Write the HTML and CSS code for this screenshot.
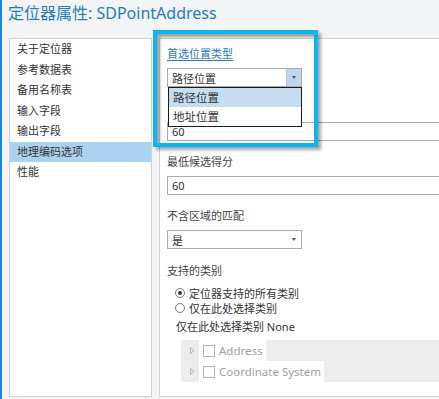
FILE: index.html
```html
<!DOCTYPE html>
<html lang="zh-Hans">
<head>
    <meta charset="UTF-8">
    <meta name="viewport" content="width=device-width, initial-scale=1.0">
    <title>定位器属性: SDPointAddress</title>
    <link rel="stylesheet" href="styles.css">
</head>
<body>

    <div class="dialog">
        <h1 class="dialog-title">定位器属性: SDPointAddress</h1>

        <div class="dialog-body">
            <ul class="nav-list">
                <li class="nav-item">关于定位器</li>
                <li class="nav-item">参考数据表</li>
                <li class="nav-item">备用名称表</li>
                <li class="nav-item">输入字段</li>
                <li class="nav-item">输出字段</li>
                <li class="nav-item active">地理编码选项</li>
                <li class="nav-item">性能</li>
            </ul>

            <div class="panel">
                <div class="field">
                    <div class="field-label focused">首选位置类型</div>
                    <div class="combo">
                        <span class="combo-value">路径位置</span>
                        <span class="combo-btn open"><span class="arrow"></span></span>
                        <ul class="combo-list">
                            <li class="combo-option selected">路径位置</li>
                            <li class="combo-option">地址位置</li>
                        </ul>
                    </div>
                </div>

                <!-- its label sits under the open list -->
                <div class="field">
                    <div class="field-label covered"></div>
                    <div class="text-input">60</div>
                </div>

                <div class="field">
                    <div class="field-label">最低候选得分</div>
                    <div class="text-input">60</div>
                </div>

                <div class="field">
                    <div class="field-label">不含区域的匹配</div>
                    <div class="combo">
                        <span class="combo-value">是</span>
                        <span class="combo-btn"><span class="arrow"></span></span>
                    </div>
                </div>

                <div class="field field-categories">
                    <div class="field-label">支持的类别</div>
                    <div class="radio-row"><span class="radio checked"></span>定位器支持的所有类别</div>
                    <div class="radio-row"><span class="radio"></span>仅在此处选择类别</div>
                    <div class="selected-note">仅在此处选择类别 None</div>

                    <div class="tree">
                        <div class="tree-row">
                            <svg class="expander" width="18" height="21" viewBox="0 0 18 21"><path d="M9.5 7.5 L13 10.5 L9.5 13.5 Z" fill="none" stroke="#b4b4b4" stroke-width="1"/></svg>
                            <span class="tree-item"><span class="checkbox"></span>Address</span>
                        </div>
                        <div class="tree-row">
                            <svg class="expander" width="18" height="21" viewBox="0 0 18 21"><path d="M9.5 7.5 L13 10.5 L9.5 13.5 Z" fill="none" stroke="#b4b4b4" stroke-width="1"/></svg>
                            <span class="tree-item"><span class="checkbox"></span>Coordinate System</span>
                        </div>
                    </div>
                </div>
            </div>
        </div>

        <!-- callout frame drawn over the first option -->
        <div class="callout"></div>
    </div>

</body>
</html>
```

FILE: styles.css
```css
:root {
    --dialog-bg: #f3f4f5;
    --panel-bg: #ffffff;
    --text-dark: #333333;
    --title-blue: #1f7cc2;
    --edge-blue: #1b87d6;
    --callout: #0db5ee;
    --border: #cfd1d3;
    --input-border: #ababab;
    --select-bg: #a9d3f1;
    --option-bg: #c6ddf1;
}

body {
    margin: 0;
    overflow: hidden;
    background-color: var(--dialog-bg);
    font-family: "Noto Sans", "Noto Sans CJK SC", sans-serif;
    color: var(--text-dark);
}

.dialog {
    position: relative;
    height: 399px;
    border-left: 2px solid var(--edge-blue);
}

.dialog-title {
    margin: 0;
    height: 38px; box-sizing: border-box;
    padding: 2px 0 0 6px;
    font-size: 16px; font-weight: 400; line-height: 22px;
    color: var(--title-blue);
}

.dialog-body {
    display: flex;
    gap: 7px;
    padding-left: 7px;
}

/* ---- left navigation ---- */
.nav-list {
    list-style: none; margin: 0; padding: 0;
    width: 143px; height: 359px; box-sizing: border-box;
    flex: none;
    background-color: var(--panel-bg);
    border: 1px solid var(--border);
}
.nav-item {
    height: 20.5px; line-height: 20.5px;
    padding-left: 7px;
    font-size: 11px;
}
.nav-item.active { background-color: var(--select-bg); }

/* ---- right panel ---- */
.panel {
    flex: none;
    width: 420px; height: 359px; box-sizing: border-box;
    padding: 7px 0 0 7px;
    background-color: var(--panel-bg);
    border: 1px solid var(--border);
}

.field { margin-bottom: 13px; }
.field-label { font-size: 11px; line-height: 16px; margin-bottom: 6px; color: #444; }
.field-label.focused { color: #2b78b8; text-decoration: underline; text-underline-offset: 2px; }
.field-label.covered { height: 16px; }

.combo {
    position: relative;
    display: flex; align-items: center;
    width: 135px; height: 19px; box-sizing: border-box;
    border: 1px solid var(--input-border);
    font-size: 11px;
}
.combo-value { flex: 1; padding-left: 4px; }
.combo-btn {
    display: flex; align-items: center; justify-content: center;
    width: 14px; height: 100%;
}
.combo-btn.open { background-color: #bdd7ee; border-left: 1px solid #a9c6e0; }
.arrow {
    width: 0; height: 0;
    border-left: 2.5px solid transparent; border-right: 2.5px solid transparent;
    border-top: 3px solid #555;
}

.combo-list {
    position: absolute; top: 18px; left: 0; z-index: 2;
    list-style: none; margin: 0; padding: 0;
    width: 134px; box-sizing: border-box;
    background-color: var(--panel-bg);
    border: 1px solid #1a1a1a;
}
.combo-option { height: 19px; line-height: 19px; padding-left: 4px; font-size: 11.5px; }
.combo-option.selected { background-color: var(--option-bg); }

.text-input {
    width: 400px; height: 19px; box-sizing: border-box;
    border: 1px solid var(--input-border);
    padding-left: 4px;
    font-size: 11px; line-height: 17px;
}

.field-categories .field-label { margin-top: 14px; margin-bottom: 6px; }
.radio-row {
    display: flex; align-items: center; gap: 4px;
    height: 15px; padding-left: 8px;
    font-size: 11px;
}
.radio {
    width: 10px; height: 10px; box-sizing: border-box;
    border: 1px solid #7a7a7a; border-radius: 50%;
    display: flex; align-items: center; justify-content: center;
}
.radio.checked::after {
    content: ""; width: 4px; height: 4px; border-radius: 50%; background-color: #3a3a3a;
}
.selected-note { margin: 4px 0 6px 9px; font-size: 11px; line-height: 15px; }

.tree {
    margin-left: 14px;
    width: 400px;
    background-color: #ececec;
}
.tree-row { display: flex; align-items: center; height: 21px; }
.expander { flex: none; }
.tree-item {
    display: flex; align-items: center; gap: 4px;
    height: 100%; padding: 0 3px 0 4px;
    background-color: var(--panel-bg);
    font-size: 11.5px; color: #a0a0a0;
}
.checkbox {
    width: 12px; height: 12px; box-sizing: border-box;
    border: 1px solid #b5b5b5; background-color: #fff;
}

/* ---- callout overlay ---- */
.callout {
    position: absolute; left: 151px; top: 30px;
    width: 165px; height: 117px; box-sizing: border-box;
    border: 4px solid var(--callout);
    box-shadow: 3px 3px 3px rgba(0, 0, 0, 0.35), inset 3px 3px 3px rgba(0, 0, 0, 0.35);
    pointer-events: none;
}
```
